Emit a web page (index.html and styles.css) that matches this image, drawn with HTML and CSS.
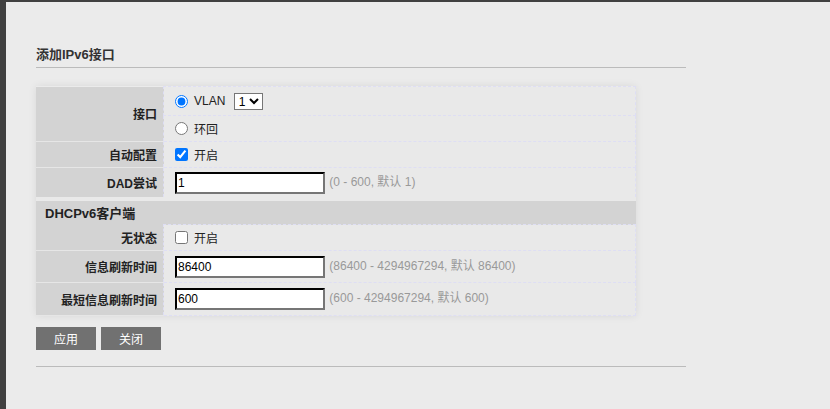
FILE: index.html
```html
<!DOCTYPE html>
<html lang="zh">
<head>
<meta charset="utf-8">
<link rel="stylesheet" href="styles.css">
</head>
<body>
<div class="frame">
  <div class="content">
    <h2 class="title">添加IPv6接口</h2>
    <table class="form">
      <tr class="h-vlan">
        <td class="label" rowspan="2">接口</td>
        <td class="value"><label class="opt"><input type="radio" name="if" checked> VLAN</label> <select class="sel"><option>1</option></select></td>
      </tr>
      <tr class="h-std">
        <td class="value"><label class="opt"><input type="radio" name="if"> 环回</label></td>
      </tr>
      <tr class="h-std">
        <td class="label">自动配置</td>
        <td class="value"><label class="opt"><input type="checkbox" checked> 开启</label></td>
      </tr>
      <tr class="h-dad">
        <td class="label">DAD尝试</td>
        <td class="value"><input class="txt" type="text" value="1"> <span class="hint">(0 - 600, 默认 1)</span></td>
      </tr>
      <tr>
        <td class="section" colspan="2">DHCPv6客户端</td>
      </tr>
      <tr class="h-std">
        <td class="label">无状态</td>
        <td class="value"><label class="opt"><input type="checkbox"> 开启</label></td>
      </tr>
      <tr class="h-info">
        <td class="label">信息刷新时间</td>
        <td class="value"><input class="txt" type="text" value="86400"> <span class="hint">(86400 - 4294967294, 默认 86400)</span></td>
      </tr>
      <tr class="h-last">
        <td class="label">最短信息刷新时间</td>
        <td class="value"><input class="txt" type="text" value="600"> <span class="hint">(600 - 4294967294, 默认 600)</span></td>
      </tr>
    </table>
    <div class="buttons">
      <button class="btn">应用</button>
      <button class="btn">关闭</button>
    </div>
    <div class="rule"></div>
  </div>
</div>
</body>
</html>
```

FILE: styles.css
```css
html, body {
  margin: 0;
  padding: 0;
  background: #404040;
  font-family: "Liberation Sans", Arial, "Noto Sans CJK SC", sans-serif;
  font-size: 12px;
  color: #222;
}
.frame {
  margin: 2px 0 0 6px;
  height: 407px;
  background: #ebebeb;
}
.content {
  padding: 45px 0 0 30px;
  width: 650px;
}
.title {
  margin: 0;
  padding-bottom: 4px;
  font-size: 13px;
  font-weight: bold;
  line-height: 16px;
  color: #333;
  border-bottom: 1px solid #bbb;
}
.form {
  margin-top: 18px;
  width: 600px;
  border-collapse: collapse;
  box-shadow: 0 0 8px rgba(0, 0, 0, 0.08);
}
.form td {
  padding: 0;
}
.label {
  width: 121px;
  padding-right: 6px !important;
  background: #d3d3d3;
  text-align: right;
  font-weight: bold;
  border-bottom: 1px solid #e6e6e6;
  color: #222;
}
.value {
  background: #e9e9e9;
  border: 1px dashed #dedef4;
  padding-left: 11px !important;
}
.h-vlan .value { height: 28px; }
.h-std .value { height: 25px; }
.h-dad .value { height: 29px; }
.h-info .value { height: 31px; }
.h-last .value { height: 32px; }
.section {
  background: #d3d3d3;
  font-weight: bold;
  font-size: 13px;
  padding: 2px 0 2px 9px !important;
  height: 18px;
  border-top: 4px solid #e9e9e9;
}
.opt {
  display: inline-flex;
  align-items: center;
  gap: 6px;
  vertical-align: middle;
}
.opt input {
  margin: 0;
  width: 13px;
  height: 13px;
}
.sel {
  margin-left: 5px;
  height: 17px;
  font-size: 12px;
  font-family: "Liberation Sans", Arial, sans-serif;
  padding: 0;
  border: 1px solid #767676;
  background: #fff;
  vertical-align: middle;
}
.txt {
  box-sizing: border-box;
  width: 150px;
  height: 22px;
  margin: 0;
  padding: 0 1px;
  border: 2px inset #767676;
  border-color: #222 #767676 #767676 #222;
  font-family: "Liberation Sans", Arial, sans-serif;
  font-size: 12px;
  background: #fff;
  vertical-align: middle;
}
.hint {
  color: #999;
  margin-left: 1px;
}
.buttons {
  display: flex;
  gap: 5px;
  margin-top: 11px;
}
.btn {
  width: 60px;
  height: 23px;
  border: none;
  background: #717171;
  color: #fff;
  font-family: "Liberation Sans", Arial, "Noto Sans CJK SC", sans-serif;
  font-size: 12px;
  padding: 0;
}
.rule {
  margin-top: 16px;
  border-top: 1px solid #bbb;
}
```
